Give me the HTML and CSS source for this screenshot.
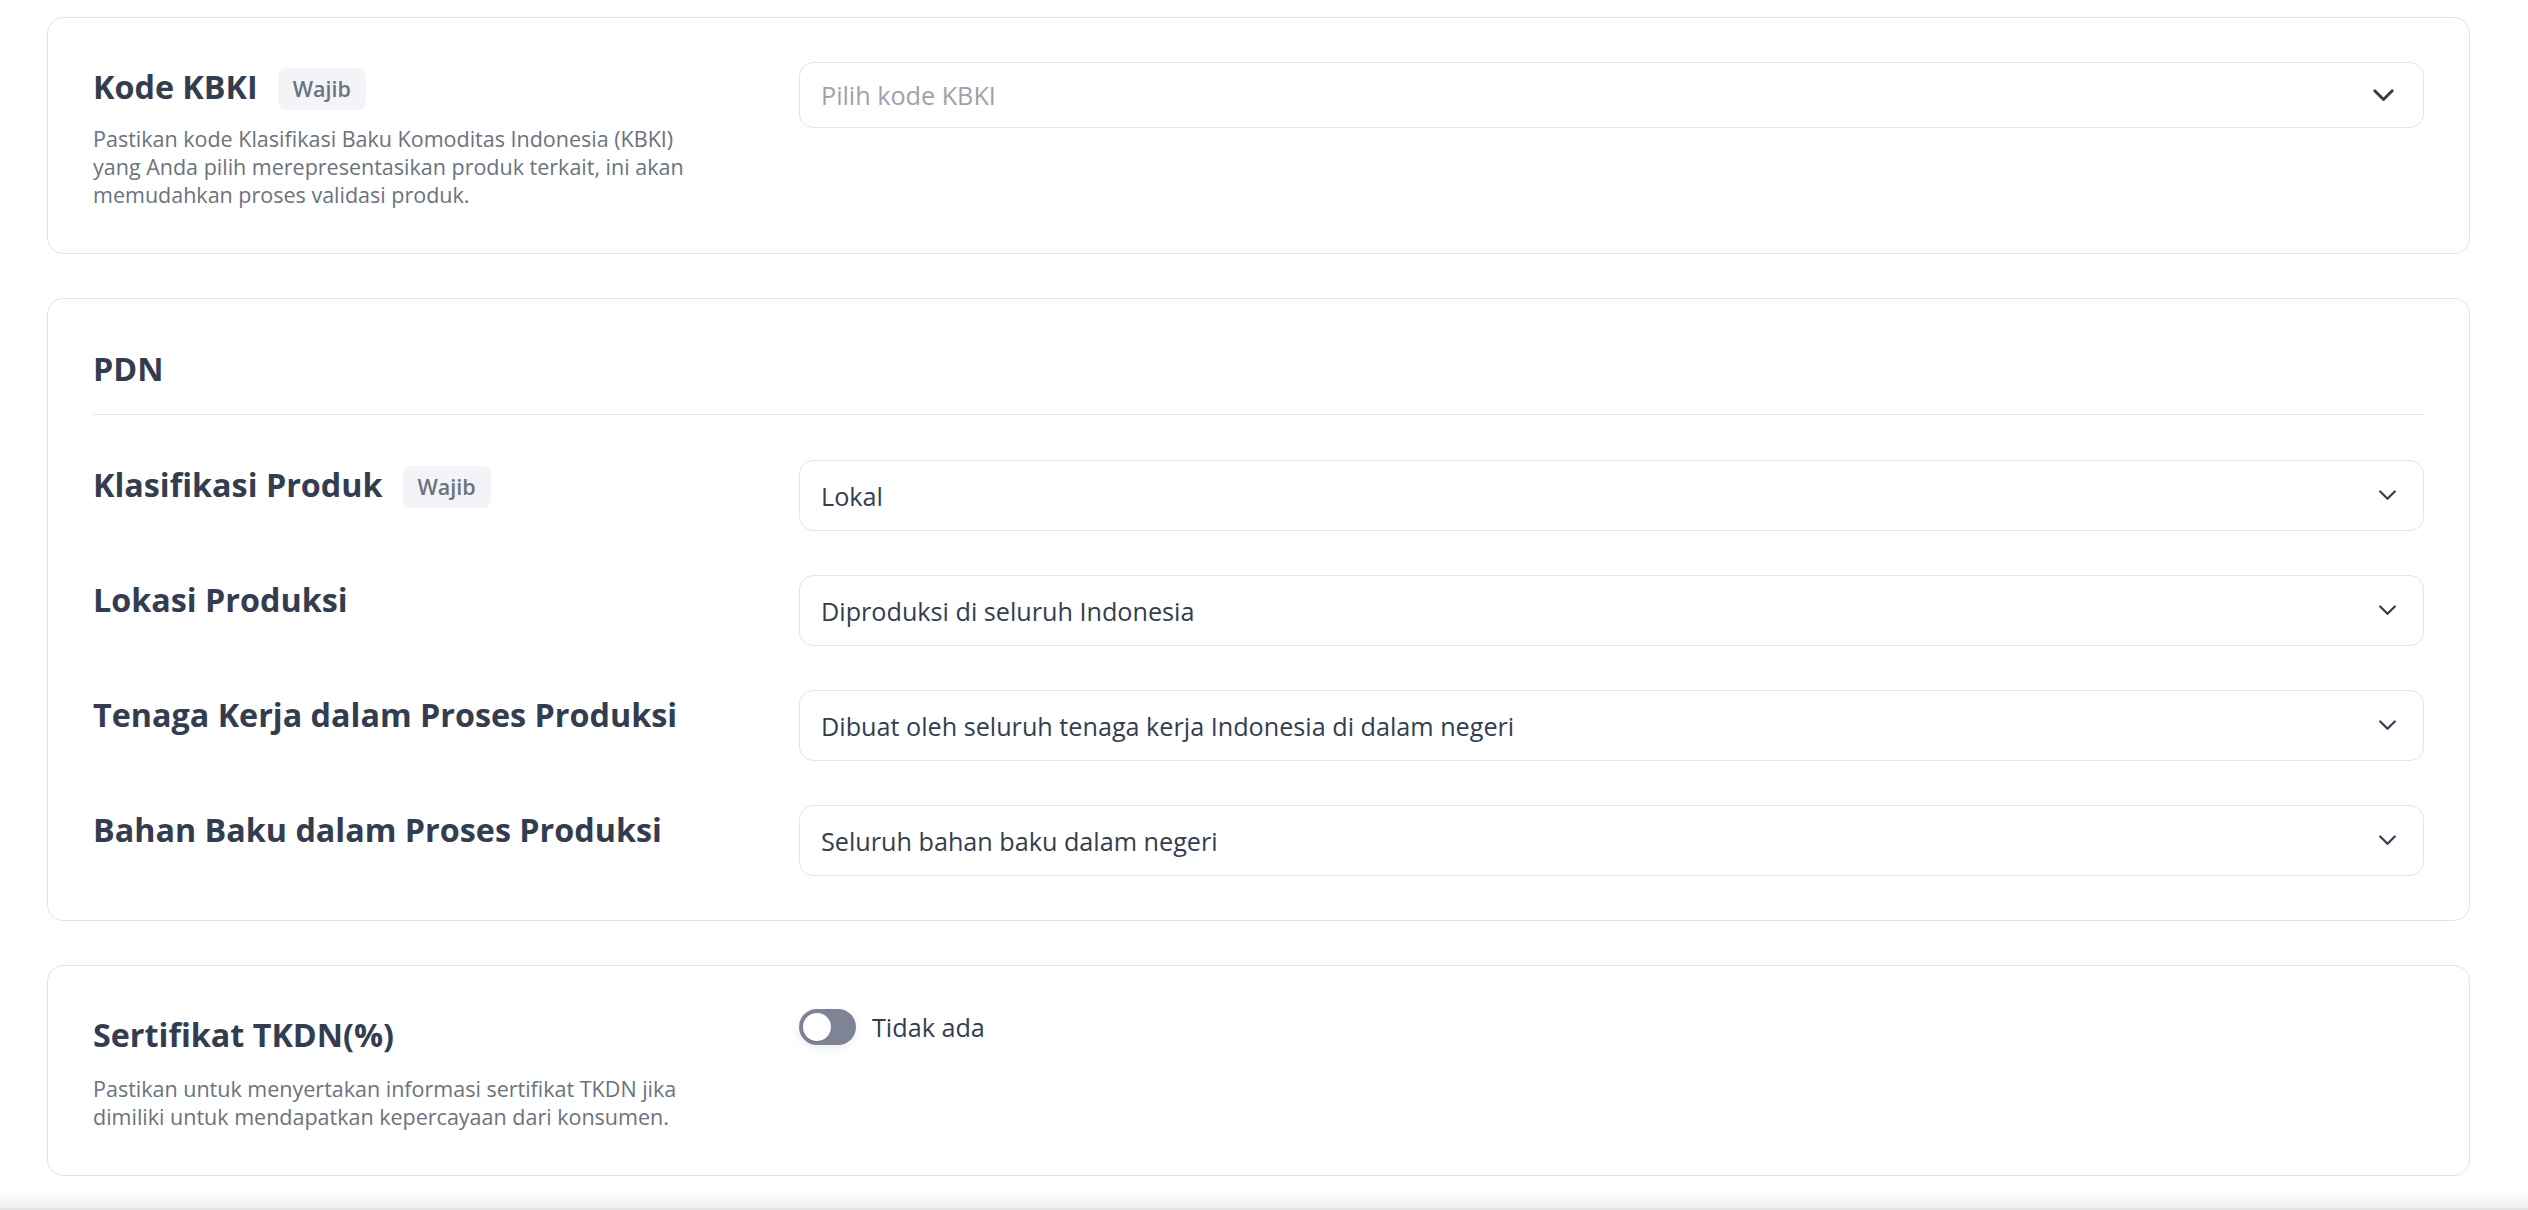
FILE: index.html
```html
<!DOCTYPE html>
<html lang="id">
<head>
<meta charset="utf-8">
<title>Form Produk</title>
<link rel="stylesheet" href="styles.css">
</head>
<body>
<div class="page">
  <section class="card">
    <div class="field">
      <div class="label">
        <div class="label-row"><h3 class="title">Kode KBKI</h3><span class="badge">Wajib</span></div>
        <p class="desc">Pastikan kode Klasifikasi Baku Komoditas Indonesia (KBKI) yang Anda pilih merepresentasikan produk terkait, ini akan memudahkan proses validasi produk.</p>
      </div>
      <div class="select select-lg">
        <span class="placeholder">Pilih kode KBKI</span>
        <svg class="chev-lg" width="21" height="13" viewBox="0 0 21 13"><polyline points="1.8,1.8 10.5,10.5 19.2,1.8" fill="none" stroke="#333d4f" stroke-width="3" stroke-linecap="round" stroke-linejoin="round"/></svg>
      </div>
    </div>
  </section>

  <section class="card">
    <h2 class="section-title">PDN</h2>
    <div class="rows">
      <div class="field">
        <div class="label">
          <div class="label-row"><h3 class="title">Klasifikasi Produk</h3><span class="badge">Wajib</span></div>
        </div>
        <div class="select">
          <span>Lokal</span>
          <svg width="17" height="11" viewBox="0 0 17 11"><polyline points="1.2,1.5 8.5,8.8 15.8,1.5" fill="none" stroke="#333d4f" stroke-width="2.2" stroke-linecap="round" stroke-linejoin="round"/></svg>
        </div>
      </div>
      <div class="field">
        <div class="label">
          <div class="label-row"><h3 class="title">Lokasi Produksi</h3></div>
        </div>
        <div class="select">
          <span>Diproduksi di seluruh Indonesia</span>
          <svg width="17" height="11" viewBox="0 0 17 11"><polyline points="1.2,1.5 8.5,8.8 15.8,1.5" fill="none" stroke="#333d4f" stroke-width="2.2" stroke-linecap="round" stroke-linejoin="round"/></svg>
        </div>
      </div>
      <div class="field">
        <div class="label">
          <div class="label-row"><h3 class="title">Tenaga Kerja dalam Proses Produksi</h3></div>
        </div>
        <div class="select">
          <span>Dibuat oleh seluruh tenaga kerja Indonesia di dalam negeri</span>
          <svg width="17" height="11" viewBox="0 0 17 11"><polyline points="1.2,1.5 8.5,8.8 15.8,1.5" fill="none" stroke="#333d4f" stroke-width="2.2" stroke-linecap="round" stroke-linejoin="round"/></svg>
        </div>
      </div>
      <div class="field">
        <div class="label">
          <div class="label-row"><h3 class="title">Bahan Baku dalam Proses Produksi</h3></div>
        </div>
        <div class="select">
          <span>Seluruh bahan baku dalam negeri</span>
          <svg width="17" height="11" viewBox="0 0 17 11"><polyline points="1.2,1.5 8.5,8.8 15.8,1.5" fill="none" stroke="#333d4f" stroke-width="2.2" stroke-linecap="round" stroke-linejoin="round"/></svg>
        </div>
      </div>
    </div>
  </section>

  <section class="card">
    <div class="field">
      <div class="label">
        <div class="label-row"><h3 class="title">Sertifikat TKDN(%)</h3></div>
        <p class="desc desc-tkdn">Pastikan untuk menyertakan informasi sertifikat TKDN jika dimiliki untuk mendapatkan kepercayaan dari konsumen.</p>
      </div>
      <div class="switch-row">
        <span class="switch"><span class="knob"></span></span>
        <span class="switch-text">Tidak ada</span>
      </div>
    </div>
  </section>
</div>
<div class="footer-shade"></div>
</body>
</html>
```

FILE: styles.css
```css
html, body {
  margin: 0;
  padding: 0;
  background: #ffffff;
}

body {
  font-family: "Open Sans", "Noto Sans", "Liberation Sans", sans-serif;
  color: #333d4f;
  overflow: hidden;
}

.page {
  padding: 17px 58px 0 47px;
  display: flex;
  flex-direction: column;
  gap: 44px;
}

.card {
  border: 1px solid #e4e4e7;
  border-radius: 16px;
  padding: 44px 45px;
  background: #fff;
}

.field {
  display: grid;
  grid-template-columns: 620px 1fr;
  column-gap: 86px;
  align-items: start;
}

.label-row {
  display: flex;
  align-items: flex-start;
  gap: 20px;
  height: 36px;
  margin-top: 6px;
}

.title {
  margin: 0;
  font-size: 32.3px;
  line-height: 36px;
  font-weight: 700;
  color: #333d4f;
  white-space: nowrap;
}

.badge {
  display: inline-block;
  height: 42px;
  line-height: 42px;
  padding: 0 15px;
  border-radius: 8px;
  background: #f3f4f7;
  color: #6b7280;
  font-size: 21.5px;
  font-weight: 600;
}

.desc {
  margin: 21px 0 0;
  font-size: 21.5px;
  line-height: 28px;
  color: #6b7280;
}

.desc-tkdn {
  margin-top: 23px;
}

.select {
  box-sizing: border-box;
  height: 71px;
  border: 1px solid #e3e5ea;
  border-radius: 14px;
  display: flex;
  align-items: center;
  justify-content: space-between;
  padding: 0 27px 0 21px;
  font-size: 25.2px;
  color: #333d4f;
}

.select-lg {
  height: 66px;
  padding-right: 29px;
}

.placeholder {
  color: #9ca3af;
}

.section-title {
  margin: 7px 0 0;
  font-size: 32.3px;
  line-height: 36px;
  font-weight: 700;
  padding-bottom: 28px;
  border-bottom: 1px solid #e6e7ea;
  color: #333d4f;
}

.rows {
  margin-top: 45px;
  display: flex;
  flex-direction: column;
  gap: 44px;
}

.switch-row {
  display: flex;
  align-items: center;
  gap: 16px;
  margin-top: -1px;
}

.switch {
  box-sizing: border-box;
  width: 57px;
  height: 36px;
  border-radius: 18px;
  background: #7e8495;
  padding: 4px;
  display: flex;
  align-items: center;
  box-shadow: 0 3px 8px rgba(60, 70, 90, 0.10);
}

.knob {
  width: 28px;
  height: 28px;
  border-radius: 50%;
  background: #ffffff;
  box-shadow: 0 1px 2px rgba(0, 0, 0, 0.15);
}

.switch-text {
  font-size: 25.2px;
  color: #333d4f;
}

.footer-shade {
  margin-top: 13px;
  height: 19px;
  background: linear-gradient(#ffffff, #f1f1f1);
  border-bottom: 3px solid #e4e4e4;
}
```
